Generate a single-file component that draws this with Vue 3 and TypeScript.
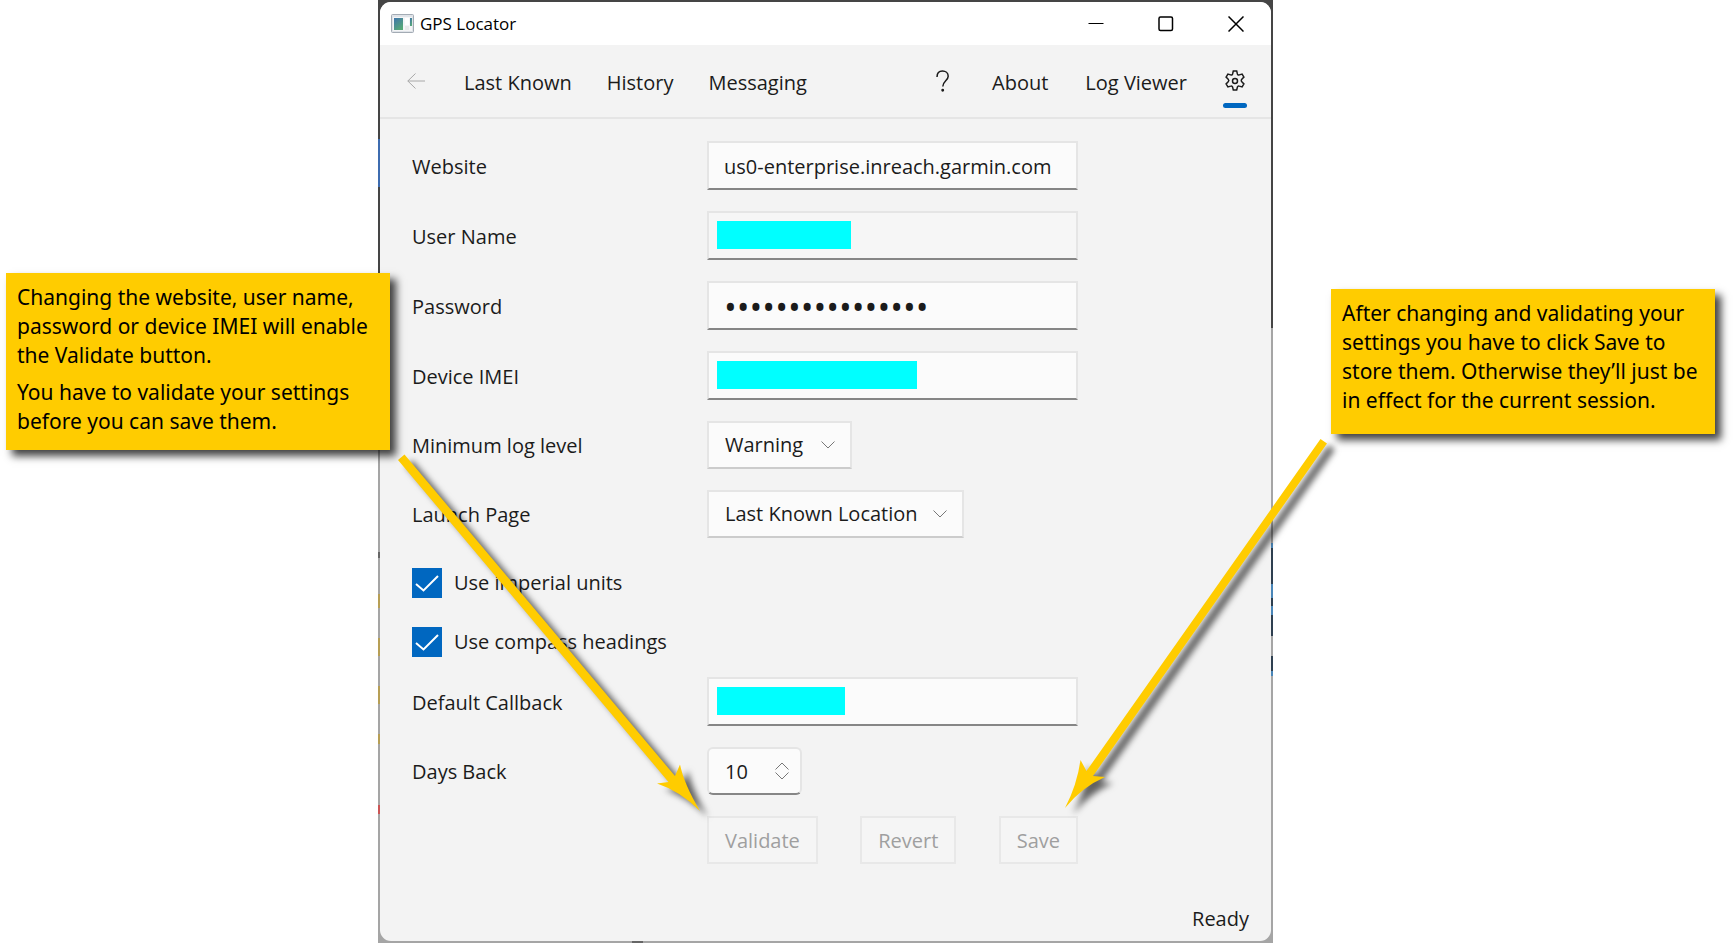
<script setup lang="ts">
import { ref } from 'vue'

const navLeft = ['Last Known', 'History', 'Messaging']
const website = ref('us0-enterprise.inreach.garmin.com')
const password = ref('0123456789abcdef')
const logLevel = ref('Warning')
const launchPage = ref('Last Known Location')
const imperial = ref(true)
const compass = ref(true)
const daysBack = ref('10')

const step = (n: number) => {
  daysBack.value = String(Number(daysBack.value) + n)
}
</script>

<template>
  <div class="stage">
    <div class="frame">
      <main class="window">
        <header class="titlebar">
          <svg class="app-icon" viewBox="0 0 23 19" aria-hidden="true">
            <defs>
              <linearGradient id="pane" x1="0" y1="0" x2="0.6" y2="1">
                <stop offset="0" stop-color="#3f74ac" />
                <stop offset="1" stop-color="#56a877" />
              </linearGradient>
            </defs>
            <rect x="0.5" y="0.5" width="22" height="18" rx="1" fill="#dfe3e8" stroke="#a3abb4" />
            <rect x="2" y="3" width="19" height="14" fill="#f4f5f6" />
            <rect x="3" y="4" width="9" height="12" fill="url(#pane)" />
            <rect x="14" y="4" width="4" height="7" fill="#fff" />
            <rect x="19" y="4" width="2" height="8" fill="url(#pane)" />
            <rect x="14" y="12" width="4" height="4" fill="#e8e9ea" />
          </svg>
          <h1 class="title">GPS Locator</h1>
          <div class="caption-buttons">
            <button type="button" aria-label="Minimize">
              <svg viewBox="0 0 16 16"><path d="M0.5 7.5h15" stroke-width="1" /></svg>
            </button>
            <button type="button" aria-label="Maximize">
              <svg viewBox="0 0 16 16"><rect x="1" y="1" width="13.5" height="13.5" rx="1.5" /></svg>
            </button>
            <button type="button" aria-label="Close">
              <svg viewBox="0 0 16 16"><path d="M0.5 0.5l15 15M15.5 0.5l-15 15" /></svg>
            </button>
          </div>
        </header>

        <nav class="nav">
          <div class="nav-group">
            <button type="button" class="back" aria-label="Back" disabled>
              <svg viewBox="0 0 18 16"><path d="M18 8H0.8M8.5 0.5L0.8 8l7.700 7.500" /></svg>
            </button>
            <a v-for="item in navLeft" :key="item" href="#">{{ item }}</a>
          </div>
          <div class="nav-group nav-end">
            <a href="#" class="help" aria-label="Help">
              <svg viewBox="0 0 14 22"><path d="M1 7C1 3 3.500 1 6.500 1s5.700 2 5.700 5.200c0 4.300-5.400 5-5.400 10.300" /><circle cx="6.700" cy="20.300" r="0.700" /></svg>
            </a>
            <a href="#">About</a>
            <a href="#">Log Viewer</a>
            <a href="#" class="gear" aria-label="Settings" aria-current="page">
              <svg viewBox="0 0 22 22">
                <path d="M9.300 1h3.400l.7 2.900c.3.900 1 1.300 1.900 1l2.800-.8 1.800 3-2.100 2.100c-.7.700-.7 1.800 0 2.500l2.100 2.200-1.800 3-2.800-.8c-.9-.3-1.600.1-1.900 1l-.7 2.900H9.300l-.7-2.900c-.3-.9-1-1.300-1.900-1l-2.800.8-1.800-3 2.100-2.200c.7-.7.7-1.800 0-2.500L2.100 7.100l1.800-3 2.800.8c.9.300 1.600-.1 1.900-1z" />
                <circle cx="11" cy="11" r="2.500" />
              </svg>
            </a>
          </div>
        </nav>

        <form class="form" @submit.prevent>
          <label for="website">Website</label>
          <div class="field"><input id="website" v-model="website" type="text" spellcheck="false" /></div>

          <label for="user">User Name</label>
          <div class="field hovered"><input id="user" type="text" /><span class="mask mask-user"></span></div>

          <label for="password">Password</label>
          <div class="field"><input id="password" v-model="password" type="password" class="secret" /></div>

          <label for="imei">Device IMEI</label>
          <div class="field"><input id="imei" type="text" /><span class="mask mask-imei"></span></div>

          <label for="log">Minimum log level</label>
          <div class="picker">
            <select id="log" v-model="logLevel" class="log-select"><option>Warning</option></select>
            <svg viewBox="0 0 14 8"><path d="M0.500 0.500L7 7l6.500-6.500" /></svg>
          </div>

          <label for="launch">Launch Page</label>
          <div class="picker">
            <select id="launch" v-model="launchPage" class="launch-select"><option>Last Known Location</option></select>
            <svg viewBox="0 0 14 8"><path d="M0.500 0.500L7 7l6.500-6.500" /></svg>
          </div>

          <div class="checks">
            <label class="check">
              <input v-model="imperial" type="checkbox" />
              <svg viewBox="0 0 30 30"><path d="M4 16l7.500 6.500L26 8" /></svg>
              Use imperial units
            </label>
            <label class="check">
              <input v-model="compass" type="checkbox" />
              <svg viewBox="0 0 30 30"><path d="M4 16l7.500 6.500L26 8" /></svg>
              Use compass headings
            </label>
          </div>

          <label for="callback">Default Callback</label>
          <div class="field"><input id="callback" type="text" /><span class="mask mask-callback"></span></div>

          <label for="days">Days Back</label>
          <div class="spinner">
            <input id="days" v-model="daysBack" type="text" inputmode="numeric" />
            <div class="steps">
              <button type="button" aria-label="Increase" @click="step(1)">
                <svg viewBox="0 0 14 8"><path d="M0.500 7.500L7 1l6.500 6.500" /></svg>
              </button>
              <button type="button" aria-label="Decrease" @click="step(-1)">
                <svg viewBox="0 0 14 8"><path d="M0.500 0.500L7 7l6.500-6.500" /></svg>
              </button>
            </div>
          </div>

          <div class="actions">
            <button type="button" disabled>Validate</button>
            <button type="button" disabled>Revert</button>
            <button type="submit" disabled>Save</button>
          </div>
        </form>

        <footer class="status">Ready</footer>
      </main>
    </div>

    <svg class="arrows" viewBox="0 0 1735 943" aria-hidden="true">
      <path d="M398 460L404.500 454.500 675 776 680 764.500Q684 784 700 811 680 791 657 783.500L668.500 782z" />
      <path d="M1320.500 439L1327 443.500 1093 776 1105 777Q1082 787 1065 808 1077 785 1080.500 760L1086.500 771z" />
    </svg>

    <aside class="callout callout-left">
      <p>Changing the website, user name,<br />password or device IMEI will enable<br />the Validate button.</p>
      <p>You have to validate your settings<br />before you can save them.</p>
    </aside>
    <aside class="callout callout-right">
      <p>After changing and validating your<br />settings you have to click Save to<br />store them. Otherwise they’ll just be<br />in effect for the current session.</p>
    </aside>
  </div>
</template>

<style>
body {
  margin: 0;
  background: #fff;
}
</style>

<style scoped>
.stage {
  position: relative;
  display: grid;
  grid-template-columns: 378fr 895fr 462fr;
  min-height: 100vh;
  font-family: 'Open Sans', 'Noto Sans', sans-serif;
  font-size: 20px;
  line-height: 28px;
  color: #1b1b1b;
}

.frame {
  grid-column: 2;
  display: flex;
  padding: 2px;
  background:
    linear-gradient(#3d6cb0, #3d6cb0) 0 139px / 2px 48px no-repeat,
    linear-gradient(#666, #666) 0 552px / 2px 6px no-repeat,
    linear-gradient(#b79f55, #b79f55) 0 594px / 2px 14px no-repeat,
    linear-gradient(#b79f55, #b79f55) 0 638px / 2px 18px no-repeat,
    linear-gradient(#b79f55, #b79f55) 0 686px / 2px 18px no-repeat,
    linear-gradient(#b79f55, #b79f55) 0 734px / 2px 10px no-repeat,
    linear-gradient(#c55, #c55) 0 805px / 2px 9px no-repeat,
    linear-gradient(#4a86b8 5px, #2e3f50 5px 41px, #4a86b8 41px 55px, #2e3f50 55px 63px, #4a86b8 63px 72px, #2e3f50 72px) 100% 543px / 2px 93px no-repeat,
    linear-gradient(#2e3f50 15px, #4a86b8 15px) 100% 656px / 2px 20px no-repeat,
    linear-gradient(#666, #666) 254px 100% / 11px 2px no-repeat,
    linear-gradient(#454545 328px, #a5a5a5 328px);
}

.window {
  flex: 1;
  display: flex;
  flex-direction: column;
  min-width: 0;
  background: #f3f3f3;
  border-radius: 11px;
  overflow: hidden;
}

button,
input,
select {
  font: inherit;
  color: inherit;
  margin: 0;
  outline: none;
}

svg {
  display: block;
  fill: none;
  stroke: currentColor;
}

.titlebar {
  display: flex;
  align-items: center;
  height: 43px;
  padding-left: 11px;
  background: #fff;
  color: #000;
}

.app-icon {
  width: 23px;
  height: 19px;
  stroke: none;
}

.title {
  margin: 0 0 0 6px;
  font-size: 17px;
  font-weight: 400;
  line-height: 24px;
}

.caption-buttons {
  display: flex;
  margin-left: auto;
}

.caption-buttons button {
  display: grid;
  place-items: center;
  width: 70px;
  height: 43px;
  padding: 0;
  border: 0;
  background: none;
}

.caption-buttons svg {
  width: 16px;
  height: 16px;
  stroke-width: 1.5;
}

.nav {
  display: flex;
  align-items: center;
  justify-content: space-between;
  height: 72px;
  padding: 0 25px 0 27px;
  border-bottom: 2px solid #e5e5e5;
}

.nav-group {
  display: flex;
  align-items: center;
  gap: 35px;
}

.nav-end {
  gap: 37px;
}

.nav a {
  padding-top: 3px;
  color: inherit;
  text-decoration: none;
  white-space: nowrap;
}

.back {
  padding: 0 4px 0 0;
  border: 0;
  background: none;
  color: #a8a8a8;
}

.back svg {
  width: 18px;
  height: 16px;
}

.nav .help {
  padding: 0 5px 0 0;
}

.help svg {
  width: 14px;
  height: 22px;
  stroke-width: 1.5;
}

.nav .gear {
  position: relative;
  padding: 0;
}

.gear svg {
  width: 22px;
  height: 22px;
  stroke-width: 1.5;
}

.gear::after {
  content: '';
  position: absolute;
  left: -1px;
  top: 33px;
  width: 24px;
  height: 5px;
  border-radius: 3px;
  background: #0067c0;
}

.form {
  display: grid;
  grid-template-columns: 295fr 371fr 161fr;
  row-gap: 21px;
  align-items: center;
  padding: 22px 32px 0;
}

.form > label {
  grid-column: 1;
  padding-top: 2px;
}

.field {
  position: relative;
  grid-column: 2;
}

.field input {
  display: block;
  box-sizing: border-box;
  width: 100%;
  height: 49px;
  padding: 2px 15px 0;
  border: 2px solid #e5e5e5;
  border-bottom-color: #868686;
  border-radius: 0;
  background: #fbfbfb;
}

.field .secret {
  font-size: 34px;
}

.hovered input {
  background: #f6f6f6;
}

.mask {
  position: absolute;
  left: 10px;
  top: 10px;
  height: 28px;
  background: #0ff;
}

.mask-user {
  width: 134px;
}

.mask-imei {
  width: 200px;
}

.mask-callback {
  width: 128px;
}

.picker {
  grid-column: 2 / 4;
  display: flex;
  align-items: center;
}

.picker select {
  appearance: none;
  box-sizing: border-box;
  height: 48px;
  padding: 0 0 0 16px;
  border: 2px solid #e5e5e5;
  border-bottom-color: #ccc;
  border-radius: 0;
  background: #fbfbfb;
}

.log-select {
  width: 145px;
}

.launch-select {
  width: 257px;
}

.picker svg {
  width: 14px;
  height: 8px;
  margin-left: -31px;
  color: #777;
  pointer-events: none;
}

.checks {
  grid-column: 1 / 4;
  display: grid;
  row-gap: 11px;
  margin-bottom: -10px;
}

.check {
  position: relative;
  display: flex;
  align-items: center;
  gap: 12px;
  height: 48px;
}

.check input {
  appearance: none;
  width: 30px;
  height: 30px;
  border: 2px solid #868686;
}

.check input:checked {
  border: 0;
  background: #0067c0;
}

.check svg {
  position: absolute;
  left: 0;
  width: 30px;
  height: 30px;
  color: #fff;
  stroke-width: 2;
  pointer-events: none;
}

.spinner {
  grid-column: 2;
  display: flex;
  box-sizing: border-box;
  width: 95px;
  height: 48px;
  border: 2px solid #e5e5e5;
  border-bottom: 2px solid #868686;
  border-radius: 6px;
  background: #fbfbfb;
}

.spinner input {
  width: 50px;
  box-sizing: border-box;
  padding: 2px 0 0 16px;
  border: 0;
  background: none;
}

.steps {
  display: grid;
  align-content: center;
  gap: 2px;
  margin-left: 16px;
  color: #777;
}

.steps button {
  padding: 0;
  border: 0;
  background: none;
  color: inherit;
}

.steps svg {
  width: 14px;
  height: 8px;
}

.actions {
  grid-column: 2;
  display: flex;
  justify-content: space-between;
}

.actions button {
  height: 48px;
  padding: 2px 16px 0;
  border: 2px solid #e8e8e8;
  background: #f5f5f5;
  color: #9f9f9f;
}

.status {
  margin-top: auto;
  padding: 0 22px 8px;
  text-align: right;
}

.arrows {
  position: absolute;
  left: 0;
  top: 0;
  width: 100%;
  pointer-events: none;
  fill: #fc0;
  stroke: none;
  filter: drop-shadow(8px 6px 3px rgba(0, 0, 0, 0.6));
}

.callout {
  position: absolute;
  box-sizing: border-box;
  width: 384px;
  padding: 10px 10px 0 11px;
  background: #fc0;
  box-shadow: 6px 6px 8px rgba(0, 0, 0, 0.75);
  color: #000;
  font-family: 'Noto Sans', 'Open Sans', sans-serif;
  font-size: 21px;
  line-height: 29px;
  white-space: nowrap;
}

.callout p {
  margin: 0 0 8px;
}

.callout-left {
  left: 6px;
  top: 273px;
  padding-bottom: 6px;
}

.callout-right {
  right: 20px;
  top: 289px;
  padding-bottom: 11px;
}
</style>
